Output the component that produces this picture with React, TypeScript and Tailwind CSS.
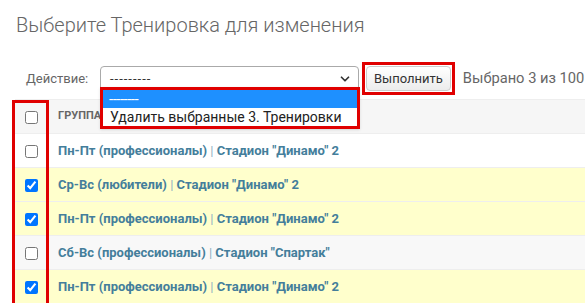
import { ChevronDown } from 'lucide-react'

// Rows of the change list
const ROWS = [
  { group: 'Пн-Пт (профессионалы)', place: 'Стадион "Динамо" 2', checked: false },
  { group: 'Ср-Вс (любители)', place: 'Стадион "Динамо" 2', checked: true },
  { group: 'Пн-Пт (профессионалы)', place: 'Стадион "Динамо" 2', checked: true },
  { group: 'Сб-Вс (профессионалы)', place: 'Стадион "Спартак"', checked: false },
  { group: 'Пн-Пт (профессионалы)', place: 'Стадион "Динамо" 2', checked: true },
]

function rowBg(i: number, checked: boolean) {
  if (checked) return 'bg-[#ffffcc]'
  return i % 2 === 1 ? 'bg-[#f8f8f8]' : 'bg-white'
}

export default function App() {
  return (
    <div className="relative w-[585px] h-[303px] overflow-hidden bg-white font-['Roboto',sans-serif] text-[13px] text-[#333]">
      {/* Title */}
      <h1 className="pl-4 pt-[13px] text-[20px] leading-6 font-light text-[#666]">
        Выберите Тренировка для изменения
      </h1>

      {/* Actions */}
      <div className="mt-[25px] flex items-center h-[33px] pl-[26px] whitespace-nowrap">
        <label className="text-[#666] text-[13px] w-[74px]">Действие:</label>
        <div className="relative">
          <div className="w-[259px] h-[25px] border border-[#aaa] rounded-[4px] bg-white flex items-center justify-between pl-[9px] pr-[6px]">
            <span className="text-[13px] text-[#333] tracking-[1px]">---------</span>
            <ChevronDown className="w-3.5 h-3.5 text-[#333]" strokeWidth={3} />
          </div>

          {/* Open native dropdown */}
          <div className="absolute left-0 top-[21px] w-[260px] border-[3px] border-[#e00000] bg-white z-10 shadow">
            <div className="h-[18px] bg-[#1e90ff] text-white pl-[6px] text-[15px] leading-[18px] tracking-[-0.5px]">
              --------
            </div>
            <div className="h-[18px] pl-[7px] text-[14px] leading-[18px] text-[#222]">
              Удалить выбранные 3. Тренировки
            </div>
          </div>
        </div>

        <div className="ml-[3px] border-[3px] border-[#e00000] p-px">
          <button className="h-[25px] px-[7px] text-[13px] text-[#333] border border-[#ccc] rounded-[4px] bg-gradient-to-b from-white to-[#ececec]">
            Выполнить
          </button>
        </div>
        <span className="ml-[8px] text-[#666] text-[14.7px]">Выбрано 3 из 100</span>
      </div>

      {/* Result table */}
      <div className="relative ml-[15px] mt-[4px]">
        <table className="w-[570px] border-collapse">
          <thead>
            <tr className="h-[34px] bg-[#f6f6f6] border-t border-b border-[#eee]">
              <th className="w-[42px] pl-[10px] text-left align-middle">
                <input type="checkbox" className="w-[13px] h-[13px] align-middle" readOnly />
              </th>
              <th className="text-left text-[11px] font-bold uppercase text-[#666] pl-[1px]">
                Группа
              </th>
            </tr>
          </thead>
          <tbody>
            {ROWS.map((r, i) => (
              <tr key={i} className={`h-[34px] border-b border-[#eee] ${rowBg(i, r.checked)}`}>
                <td className="pl-[10px] align-middle">
                  <input
                    type="checkbox"
                    defaultChecked={r.checked}
                    className="w-[13px] h-[13px] align-middle accent-[#0075ff]"
                  />
                </td>
                <td className="pl-[1px] align-middle text-[13px] font-bold text-[#447e9b] whitespace-nowrap">
                  {r.group} <span className="text-[#8fb0c2] font-normal">|</span> {r.place}
                </td>
              </tr>
            ))}
          </tbody>
        </table>

        {/* Highlight around the checkbox column */}
        <div className="absolute left-[-3px] top-[1px] w-[37px] h-[220px] border-[3px] border-[#e00000] pointer-events-none" />
      </div>
    </div>
  )
}
